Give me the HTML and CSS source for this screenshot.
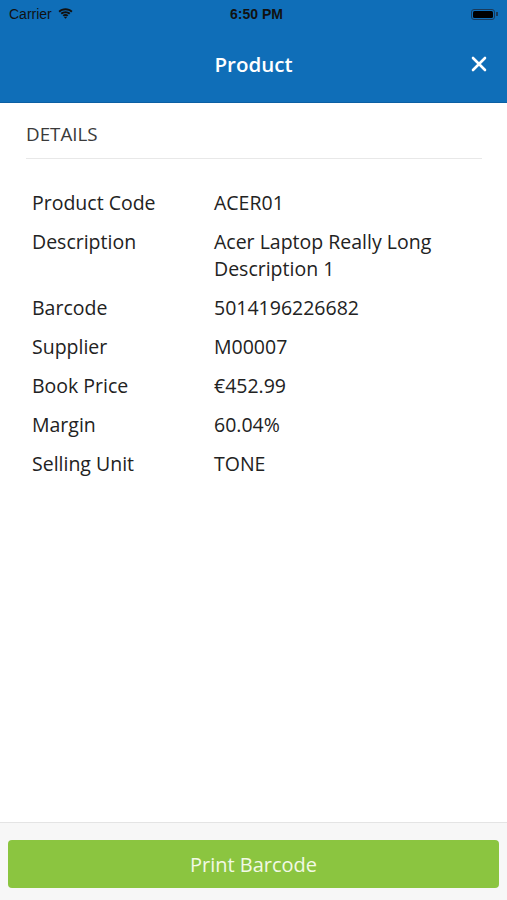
FILE: index.html
```html
<!DOCTYPE html>
<html>
<head>
<meta charset="utf-8">
<link rel="stylesheet" href="styles.css">
</head>
<body>
<div class="screen">
  <header class="topbar">
    <div class="status">
      <div class="status-left">
        <span class="carrier">Carrier</span>
        <svg class="wifi" width="15" height="11" viewBox="0 0 15 11">
          <path d="M7.5 2.2c2.2 0 4.2.8 5.7 2.2l1.3-1.4C12.6 1.2 10.2.2 7.5.2S2.4 1.2.5 3l1.3 1.4C3.3 3 5.3 2.2 7.5 2.2z" fill="#111"/>
          <path d="M7.5 5.2c1.4 0 2.6.5 3.6 1.3l1.3-1.4C11.1 3.9 9.4 3.2 7.5 3.2S3.9 3.9 2.6 5.1l1.3 1.4c1-.8 2.200-1.3 3.600-1.3z" fill="#111"/>
          <path d="M7.5 8.1c.6 0 1.1.2 1.5.5l1.4-1.4C9.6 6.5 8.6 6.1 7.5 6.1s-2.1.4-2.9 1.1L6 8.6c.4-.3.9-.5 1.5-.5z" fill="#111"/>
          <path d="M7.5 10.8L9 9.3c-.4-.4-.9-.6-1.5-.6s-1.1.2-1.5.6z" fill="#111"/>
        </svg>
      </div>
      <div class="time">6:50 PM</div>
      <div class="status-right">
        <div class="battery"><div class="battery-fill"></div></div>
        <div class="battery-tip"></div>
      </div>
    </div>
    <div class="navbar">
      <div class="nav-title">Product</div>
      <svg class="close" width="16" height="16" viewBox="0 0 16 16">
        <path d="M2 2L14 14M14 2L2 14" stroke="#fff" stroke-width="2.6" stroke-linecap="round"/>
      </svg>
    </div>
  </header>

  <main class="content">
    <div class="section-title">DETAILS</div>
    <div class="details">
      <div class="row"><div class="label">Product Code</div><div class="value">ACER01</div></div>
      <div class="row"><div class="label">Description</div><div class="value">Acer Laptop Really Long Description 1</div></div>
      <div class="row"><div class="label">Barcode</div><div class="value">5014196226682</div></div>
      <div class="row"><div class="label">Supplier</div><div class="value">M00007</div></div>
      <div class="row"><div class="label">Book Price</div><div class="value">€452.99</div></div>
      <div class="row"><div class="label">Margin</div><div class="value">60.04%</div></div>
      <div class="row"><div class="label">Selling Unit</div><div class="value">TONE</div></div>
    </div>
  </main>

  <footer class="footer">
    <button class="print-btn">Print Barcode</button>
  </footer>
</div>
</body>
</html>
```

FILE: styles.css
```css
* { box-sizing: border-box; }
html, body {
  margin: 0;
  padding: 0;
  height: 100%;
}
body {
  font-family: "Open Sans", "Noto Sans", sans-serif;
  background: #fff;
  color: #222;
}
.screen {
  width: 507px;
  height: 900px;
  display: flex;
  flex-direction: column;
}
.topbar {
  background: #0f6eb8;
  height: 103px;
  border-bottom: 1px solid #0b5fa3;
  display: flex;
  flex-direction: column;
}
.status {
  height: 28px;
  display: flex;
  align-items: center;
  justify-content: space-between;
  padding: 0 9px 0 9px;
  font-family: "Liberation Sans", "Inter", sans-serif;
}
.status-left {
  display: flex;
  align-items: center;
  gap: 6px;
  width: 100px;
}
.carrier {
  font-size: 14px;
  color: #111;
}
.wifi { margin-top: -2px; }
.time {
  font-size: 14px;
  font-weight: 700;
  color: #111;
  padding-left: 6px;
}
.status-right {
  width: 100px;
  display: flex;
  justify-content: flex-end;
  align-items: center;
}
.battery {
  width: 24px;
  height: 11px;
  border: 1px solid #1a3a5a;
  border-radius: 3px;
  padding: 1px;
}
.battery-fill {
  width: 100%;
  height: 100%;
  background: #000;
  border-radius: 1.5px;
}
.battery-tip {
  width: 1.5px;
  height: 4px;
  background: #1a3a5a;
  margin-left: 1px;
}
.navbar {
  flex: 1;
  position: relative;
  display: flex;
  align-items: center;
  justify-content: center;
  padding-bottom: 2px;
}
.nav-title {
  color: #fff;
  font-size: 20.5px;
  font-weight: 600;
}
.close {
  position: absolute;
  right: 20px;
  top: 28px;
}
.content {
  flex: 1;
  padding: 0 25px 0 26px;
}
.section-title {
  font-size: 18.8px;
  color: #3a3a3a;
  padding-top: 19px;
  padding-bottom: 11px;
  line-height: 25px;
  border-bottom: 1px solid #e8e8e8;
}
.details {
  padding: 30px 0 0 6px;
  display: flex;
  flex-direction: column;
  gap: 12px;
}
.row {
  display: flex;
  font-size: 19.5px;
  line-height: 27px;
  color: #222;
}
.label {
  width: 182px;
  flex: none;
}
.value {
  width: 250px;
}
.footer {
  height: 78px;
  background: #f7f7f7;
  border-top: 1px solid #e4e4e4;
  padding: 17px 8px 0 8px;
}
.print-btn {
  width: 100%;
  height: 48px;
  border: none;
  border-radius: 4px;
  background: #8bc540;
  color: #f2f9e6;
  font-family: "Open Sans", "Noto Sans", sans-serif;
  font-size: 20px;
  padding: 0;
}
```
